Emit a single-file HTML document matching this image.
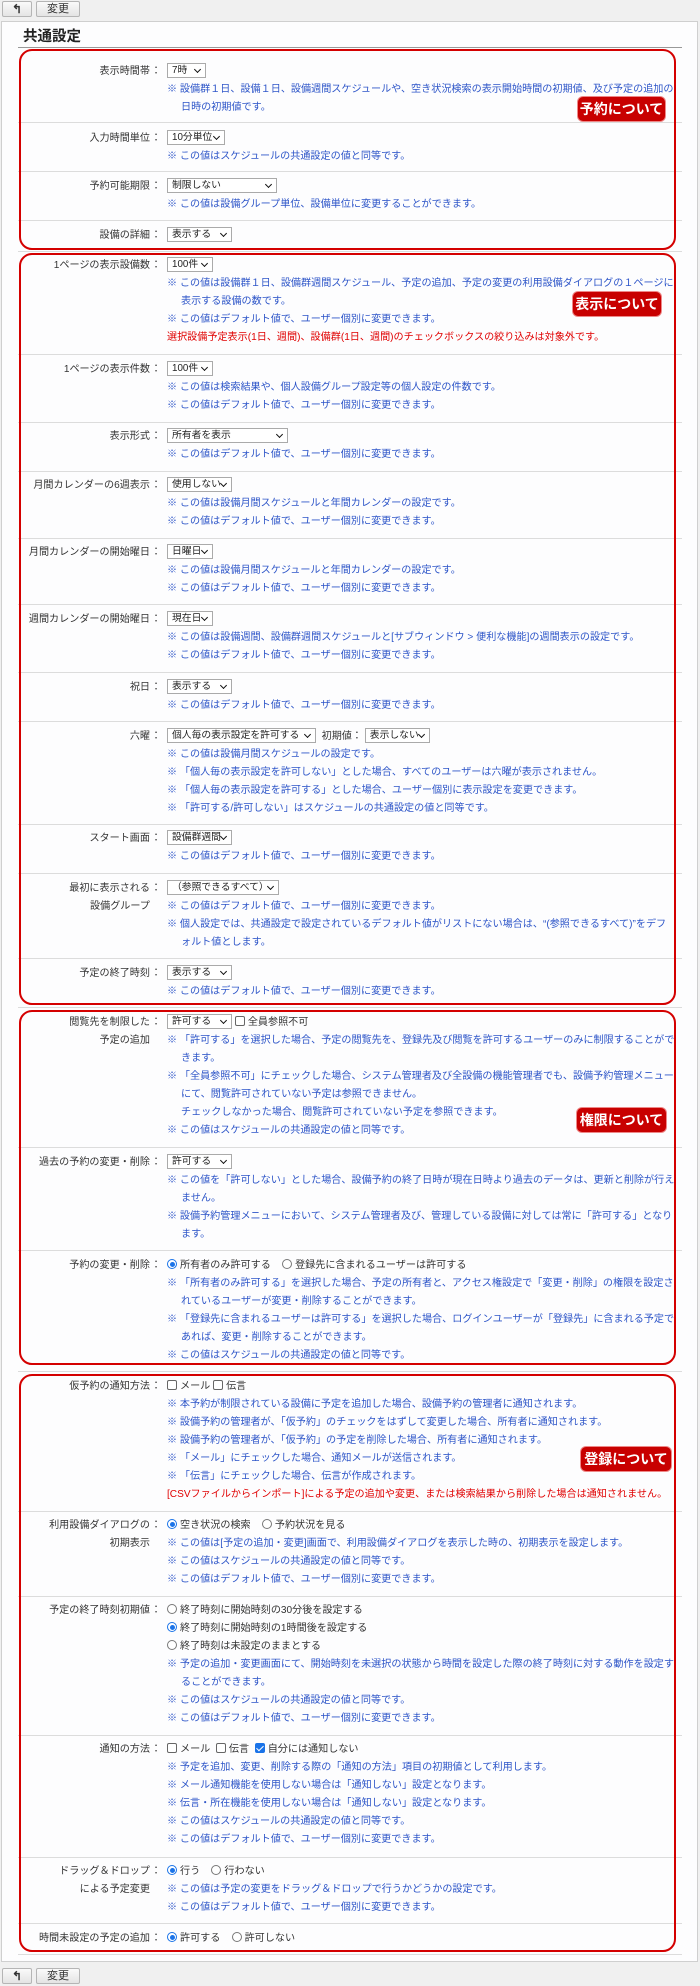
<!DOCTYPE html>
<html><head><meta charset="utf-8"><style>
*{margin:0;padding:0;box-sizing:border-box}
body{width:700px;height:1986px;background:#f0f0f0;position:relative;overflow:hidden;font-family:"Liberation Sans","Noto Sans CJK JP",sans-serif;font-size:10.1px;color:#333}
.btn{position:absolute;height:16px;border:1px solid #b5b5b5;border-radius:2px;background:linear-gradient(#fafafa,#e4e4e4);font-size:11px;text-align:center;line-height:14px;color:#333}
.panel{position:absolute;left:1px;top:21px;width:697px;height:1941px;background:#fdfdfe;border:1px solid #cfcfcf}
.title{position:absolute;left:23px;top:25px;font-size:14.5px;font-weight:bold;color:#222}
.hl{position:absolute;left:18px;width:664px;height:1px;background:#dcdcdc}
.box{position:absolute;left:19px;width:657px;border:2px solid #d40000;border-radius:13px}
.badge{position:absolute;background:#c80000;color:#fff;font-weight:bold;font-size:14px;border-radius:5px;text-align:center;line-height:24px;height:24px;box-shadow:0 0 0 1px #e88}
.r{position:absolute;left:0;width:700px;line-height:18px;white-space:nowrap}
.lb{position:absolute;right:550px;text-align:right;top:0}
.cl{position:absolute;left:151px;top:0}
.c{position:absolute;left:167px;top:0}
.n{color:#2d55c8}
.i{padding-left:14px}
.red{color:#e00000}
.sel{display:inline-block;height:15px;line-height:13px;border:1px solid #aaa;background:#fff;vertical-align:middle;position:relative;padding-left:4px;font-size:9.8px;color:#222;margin-top:-2px;overflow:hidden}
.sel:after{content:"";position:absolute;right:5px;top:3px;width:4px;height:4px;border-right:1.5px solid #111;border-bottom:1.5px solid #111;transform:rotate(45deg)}
.cb{display:inline-block;width:10px;height:10px;border:1px solid #666;border-radius:2px;vertical-align:-1px;margin-right:3px;background:#fff}
.cb.on{background:#1a73e8;border-color:#1a73e8;position:relative}
.cb.on:after{content:"";position:absolute;left:2.5px;top:0px;width:3px;height:6px;border-right:1.5px solid #fff;border-bottom:1.5px solid #fff;transform:rotate(45deg)}
.rd{display:inline-block;width:10px;height:10px;border:1px solid #777;border-radius:50%;vertical-align:-1px;margin-right:3px;background:#fff;position:relative}
.rd.on{border-color:#1a73e8}
.rd.on:after{content:"";position:absolute;left:1.5px;top:1.5px;width:5px;height:5px;border-radius:50%;background:#1a73e8}
</style></head><body>
<div class="btn" style="left:2px;top:1px;width:30px;font-size:12px;font-weight:bold">&#x21B0;</div>
<div class="btn" style="left:36px;top:1px;width:44px">変更</div>
<div class="panel"></div>
<div class="title">共通設定</div>
<div class="hl" style="top:47px;background:#999"></div>
<div class="hl" style="top:122px"></div><div class="hl" style="top:171px"></div><div class="hl" style="top:220px"></div><div class="hl" style="top:251px"></div>
<div class="hl" style="top:354px"></div><div class="hl" style="top:422px"></div><div class="hl" style="top:471px"></div><div class="hl" style="top:538px"></div><div class="hl" style="top:604px"></div><div class="hl" style="top:672px"></div><div class="hl" style="top:721px"></div><div class="hl" style="top:824px"></div><div class="hl" style="top:873px"></div><div class="hl" style="top:958px"></div><div class="hl" style="top:1007px"></div>
<div class="hl" style="top:1147px"></div><div class="hl" style="top:1250px"></div><div class="hl" style="top:1371px"></div>
<div class="hl" style="top:1511px"></div><div class="hl" style="top:1596px"></div><div class="hl" style="top:1735px"></div><div class="hl" style="top:1857px"></div><div class="hl" style="top:1923px"></div><div class="hl" style="top:1954px"></div>

<div class="box" style="top:49px;height:201px"></div>
<div class="box" style="top:253px;height:752px"></div>
<div class="box" style="top:1010px;height:355px"></div>
<div class="box" style="top:1374px;height:578px"></div>

<!-- sec1 -->
<div class="r" style="top:63px"><div class="lb">表示時間帯</div><div class="cl">：</div><div class="c"><span class="sel" style="width:39px">7時</span><div class="n">※ 設備群１日、設備１日、設備週間スケジュールや、空き状況検索の表示開始時間の初期値、及び予定の追加の</div><div class="n i">日時の初期値です。</div></div></div>
<div class="r" style="top:130px"><div class="lb">入力時間単位</div><div class="cl">：</div><div class="c"><span class="sel" style="width:58px">10分単位</span><div class="n">※ この値はスケジュールの共通設定の値と同等です。</div></div></div>
<div class="r" style="top:178px"><div class="lb">予約可能期限</div><div class="cl">：</div><div class="c"><span class="sel" style="width:110px">制限しない</span><div class="n">※ この値は設備グループ単位、設備単位に変更することができます。</div></div></div>
<div class="r" style="top:227px"><div class="lb">設備の詳細</div><div class="cl">：</div><div class="c"><span class="sel" style="width:65px">表示する</span></div></div>
<div class="badge" style="left:578px;top:97px;width:87px">予約について</div>

<!-- sec2 -->
<div class="r" style="top:257px"><div class="lb">1ページの表示設備数</div><div class="cl">：</div><div class="c"><span class="sel" style="width:46px">100件</span><div class="n">※ この値は設備群１日、設備群週間スケジュール、予定の追加、予定の変更の利用設備ダイアログの１ページに</div><div class="n i">表示する設備の数です。</div><div class="n">※ この値はデフォルト値で、ユーザー個別に変更できます。</div><div class="red">選択設備予定表示(1日、週間)、設備群(1日、週間)のチェックボックスの絞り込みは対象外です。</div></div></div>
<div class="r" style="top:361px"><div class="lb">1ページの表示件数</div><div class="cl">：</div><div class="c"><span class="sel" style="width:46px">100件</span><div class="n">※ この値は検索結果や、個人設備グループ設定等の個人設定の件数です。</div><div class="n">※ この値はデフォルト値で、ユーザー個別に変更できます。</div></div></div>
<div class="r" style="top:428px"><div class="lb">表示形式</div><div class="cl">：</div><div class="c"><span class="sel" style="width:121px">所有者を表示</span><div class="n">※ この値はデフォルト値で、ユーザー個別に変更できます。</div></div></div>
<div class="r" style="top:477px"><div class="lb">月間カレンダーの6週表示</div><div class="cl">：</div><div class="c"><span class="sel" style="width:65px">使用しない</span><div class="n">※ この値は設備月間スケジュールと年間カレンダーの設定です。</div><div class="n">※ この値はデフォルト値で、ユーザー個別に変更できます。</div></div></div>
<div class="r" style="top:544px"><div class="lb">月間カレンダーの開始曜日</div><div class="cl">：</div><div class="c"><span class="sel" style="width:46px">日曜日</span><div class="n">※ この値は設備月間スケジュールと年間カレンダーの設定です。</div><div class="n">※ この値はデフォルト値で、ユーザー個別に変更できます。</div></div></div>
<div class="r" style="top:611px"><div class="lb">週間カレンダーの開始曜日</div><div class="cl">：</div><div class="c"><span class="sel" style="width:46px">現在日</span><div class="n">※ この値は設備週間、設備群週間スケジュールと[サブウィンドウ &gt; 便利な機能]の週間表示の設定です。</div><div class="n">※ この値はデフォルト値で、ユーザー個別に変更できます。</div></div></div>
<div class="r" style="top:679px"><div class="lb">祝日</div><div class="cl">：</div><div class="c"><span class="sel" style="width:65px">表示する</span><div class="n">※ この値はデフォルト値で、ユーザー個別に変更できます。</div></div></div>
<div class="r" style="top:728px"><div class="lb">六曜</div><div class="cl">：</div><div class="c"><span class="sel" style="width:149px">個人毎の表示設定を許可する</span> &nbsp;初期値： <span class="sel" style="width:65px">表示しない</span><div class="n">※ この値は設備月間スケジュールの設定です。</div><div class="n">※ 「個人毎の表示設定を許可しない」とした場合、すべてのユーザーは六曜が表示されません。</div><div class="n">※ 「個人毎の表示設定を許可する」とした場合、ユーザー個別に表示設定を変更できます。</div><div class="n">※ 「許可する/許可しない」はスケジュールの共通設定の値と同等です。</div></div></div>
<div class="r" style="top:830px"><div class="lb">スタート画面</div><div class="cl">：</div><div class="c"><span class="sel" style="width:65px">設備群週間</span><div class="n">※ この値はデフォルト値で、ユーザー個別に変更できます。</div></div></div>
<div class="r" style="top:880px"><div class="lb">最初に表示される<br>設備グループ</div><div class="cl">：</div><div class="c"><span class="sel" style="width:112px">（参照できるすべて）</span><div class="n">※ この値はデフォルト値で、ユーザー個別に変更できます。</div><div class="n">※ 個人設定では、共通設定で設定されているデフォルト値がリストにない場合は、“(参照できるすべて)”をデフ</div><div class="n i">ォルト値とします。</div></div></div>
<div class="r" style="top:965px"><div class="lb">予定の終了時刻</div><div class="cl">：</div><div class="c"><span class="sel" style="width:65px">表示する</span><div class="n">※ この値はデフォルト値で、ユーザー個別に変更できます。</div></div></div>
<div class="badge" style="left:573px;top:292px;width:88px">表示について</div>

<!-- sec3 -->
<div class="r" style="top:1014px"><div class="lb">閲覧先を制限した<br>予定の追加</div><div class="cl">：</div><div class="c"><span class="sel" style="width:65px">許可する</span> <span class="cb"></span>全員参照不可<div class="n">※ 「許可する」を選択した場合、予定の閲覧先を、登録先及び閲覧を許可するユーザーのみに制限することがで</div><div class="n i">きます。</div><div class="n">※ 「全員参照不可」にチェックした場合、システム管理者及び全設備の機能管理者でも、設備予約管理メニュー</div><div class="n i">にて、閲覧許可されていない予定は参照できません。</div><div class="n i">チェックしなかった場合、閲覧許可されていない予定を参照できます。</div><div class="n">※ この値はスケジュールの共通設定の値と同等です。</div></div></div>
<div class="r" style="top:1154px"><div class="lb">過去の予約の変更・削除</div><div class="cl">：</div><div class="c"><span class="sel" style="width:65px">許可する</span><div class="n">※ この値を「許可しない」とした場合、設備予約の終了日時が現在日時より過去のデータは、更新と削除が行え</div><div class="n i">ません。</div><div class="n">※ 設備予約管理メニューにおいて、システム管理者及び、管理している設備に対しては常に「許可する」となり</div><div class="n i">ます。</div></div></div>
<div class="r" style="top:1257px"><div class="lb">予約の変更・削除</div><div class="cl">：</div><div class="c"><span class="rd on"></span>所有者のみ許可する &nbsp;&nbsp; <span class="rd"></span>登録先に含まれるユーザーは許可する<div class="n">※ 「所有者のみ許可する」を選択した場合、予定の所有者と、アクセス権設定で「変更・削除」の権限を設定さ</div><div class="n i">れているユーザーが変更・削除することができます。</div><div class="n">※ 「登録先に含まれるユーザーは許可する」を選択した場合、ログインユーザーが「登録先」に含まれる予定で</div><div class="n i">あれば、変更・削除することができます。</div><div class="n">※ この値はスケジュールの共通設定の値と同等です。</div></div></div>
<div class="badge" style="left:577px;top:1108px;width:89px">権限について</div>

<!-- sec4 -->
<div class="r" style="top:1378px"><div class="lb">仮予約の通知方法</div><div class="cl">：</div><div class="c"><span class="cb"></span>メール <span class="cb"></span>伝言<div class="n">※ 本予約が制限されている設備に予定を追加した場合、設備予約の管理者に通知されます。</div><div class="n">※ 設備予約の管理者が、「仮予約」のチェックをはずして変更した場合、所有者に通知されます。</div><div class="n">※ 設備予約の管理者が、「仮予約」の予定を削除した場合、所有者に通知されます。</div><div class="n">※ 「メール」にチェックした場合、通知メールが送信されます。</div><div class="n">※ 「伝言」にチェックした場合、伝言が作成されます。</div><div class="red">[CSVファイルからインポート]による予定の追加や変更、または検索結果から削除した場合は通知されません。</div></div></div>
<div class="r" style="top:1517px"><div class="lb">利用設備ダイアログの<br>初期表示</div><div class="cl">：</div><div class="c"><span class="rd on"></span>空き状況の検索 &nbsp;&nbsp; <span class="rd"></span>予約状況を見る<div class="n">※ この値は[予定の追加・変更]画面で、利用設備ダイアログを表示した時の、初期表示を設定します。</div><div class="n">※ この値はスケジュールの共通設定の値と同等です。</div><div class="n">※ この値はデフォルト値で、ユーザー個別に変更できます。</div></div></div>
<div class="r" style="top:1602px"><div class="lb">予定の終了時刻初期値</div><div class="cl">：</div><div class="c"><div><span class="rd"></span>終了時刻に開始時刻の30分後を設定する</div><div><span class="rd on"></span>終了時刻に開始時刻の1時間後を設定する</div><div><span class="rd"></span>終了時刻は未設定のままとする</div><div class="n">※ 予定の追加・変更画面にて、開始時刻を未選択の状態から時間を設定した際の終了時刻に対する動作を設定す</div><div class="n i">ることができます。</div><div class="n">※ この値はスケジュールの共通設定の値と同等です。</div><div class="n">※ この値はデフォルト値で、ユーザー個別に変更できます。</div></div></div>
<div class="r" style="top:1741px"><div class="lb">通知の方法</div><div class="cl">：</div><div class="c"><span class="cb"></span>メール &nbsp;<span class="cb"></span>伝言 &nbsp;<span class="cb on"></span>自分には通知しない<div class="n">※ 予定を追加、変更、削除する際の「通知の方法」項目の初期値として利用します。</div><div class="n">※ メール通知機能を使用しない場合は「通知しない」設定となります。</div><div class="n">※ 伝言・所在機能を使用しない場合は「通知しない」設定となります。</div><div class="n">※ この値はスケジュールの共通設定の値と同等です。</div><div class="n">※ この値はデフォルト値で、ユーザー個別に変更できます。</div></div></div>
<div class="r" style="top:1863px"><div class="lb">ドラッグ＆ドロップ<br>による予定変更</div><div class="cl">：</div><div class="c"><span class="rd on"></span>行う &nbsp;&nbsp; <span class="rd"></span>行わない<div class="n">※ この値は予定の変更をドラッグ＆ドロップで行うかどうかの設定です。</div><div class="n">※ この値はデフォルト値で、ユーザー個別に変更できます。</div></div></div>
<div class="r" style="top:1930px"><div class="lb">時間未設定の予定の追加</div><div class="cl">：</div><div class="c"><span class="rd on"></span>許可する &nbsp;&nbsp; <span class="rd"></span>許可しない</div></div>
<div class="badge" style="left:581px;top:1447px;width:90px">登録について</div>

<div class="btn" style="left:2px;top:1968px;width:30px;font-size:12px;font-weight:bold">&#x21B0;</div>
<div class="btn" style="left:36px;top:1968px;width:44px">変更</div>
</body></html>
